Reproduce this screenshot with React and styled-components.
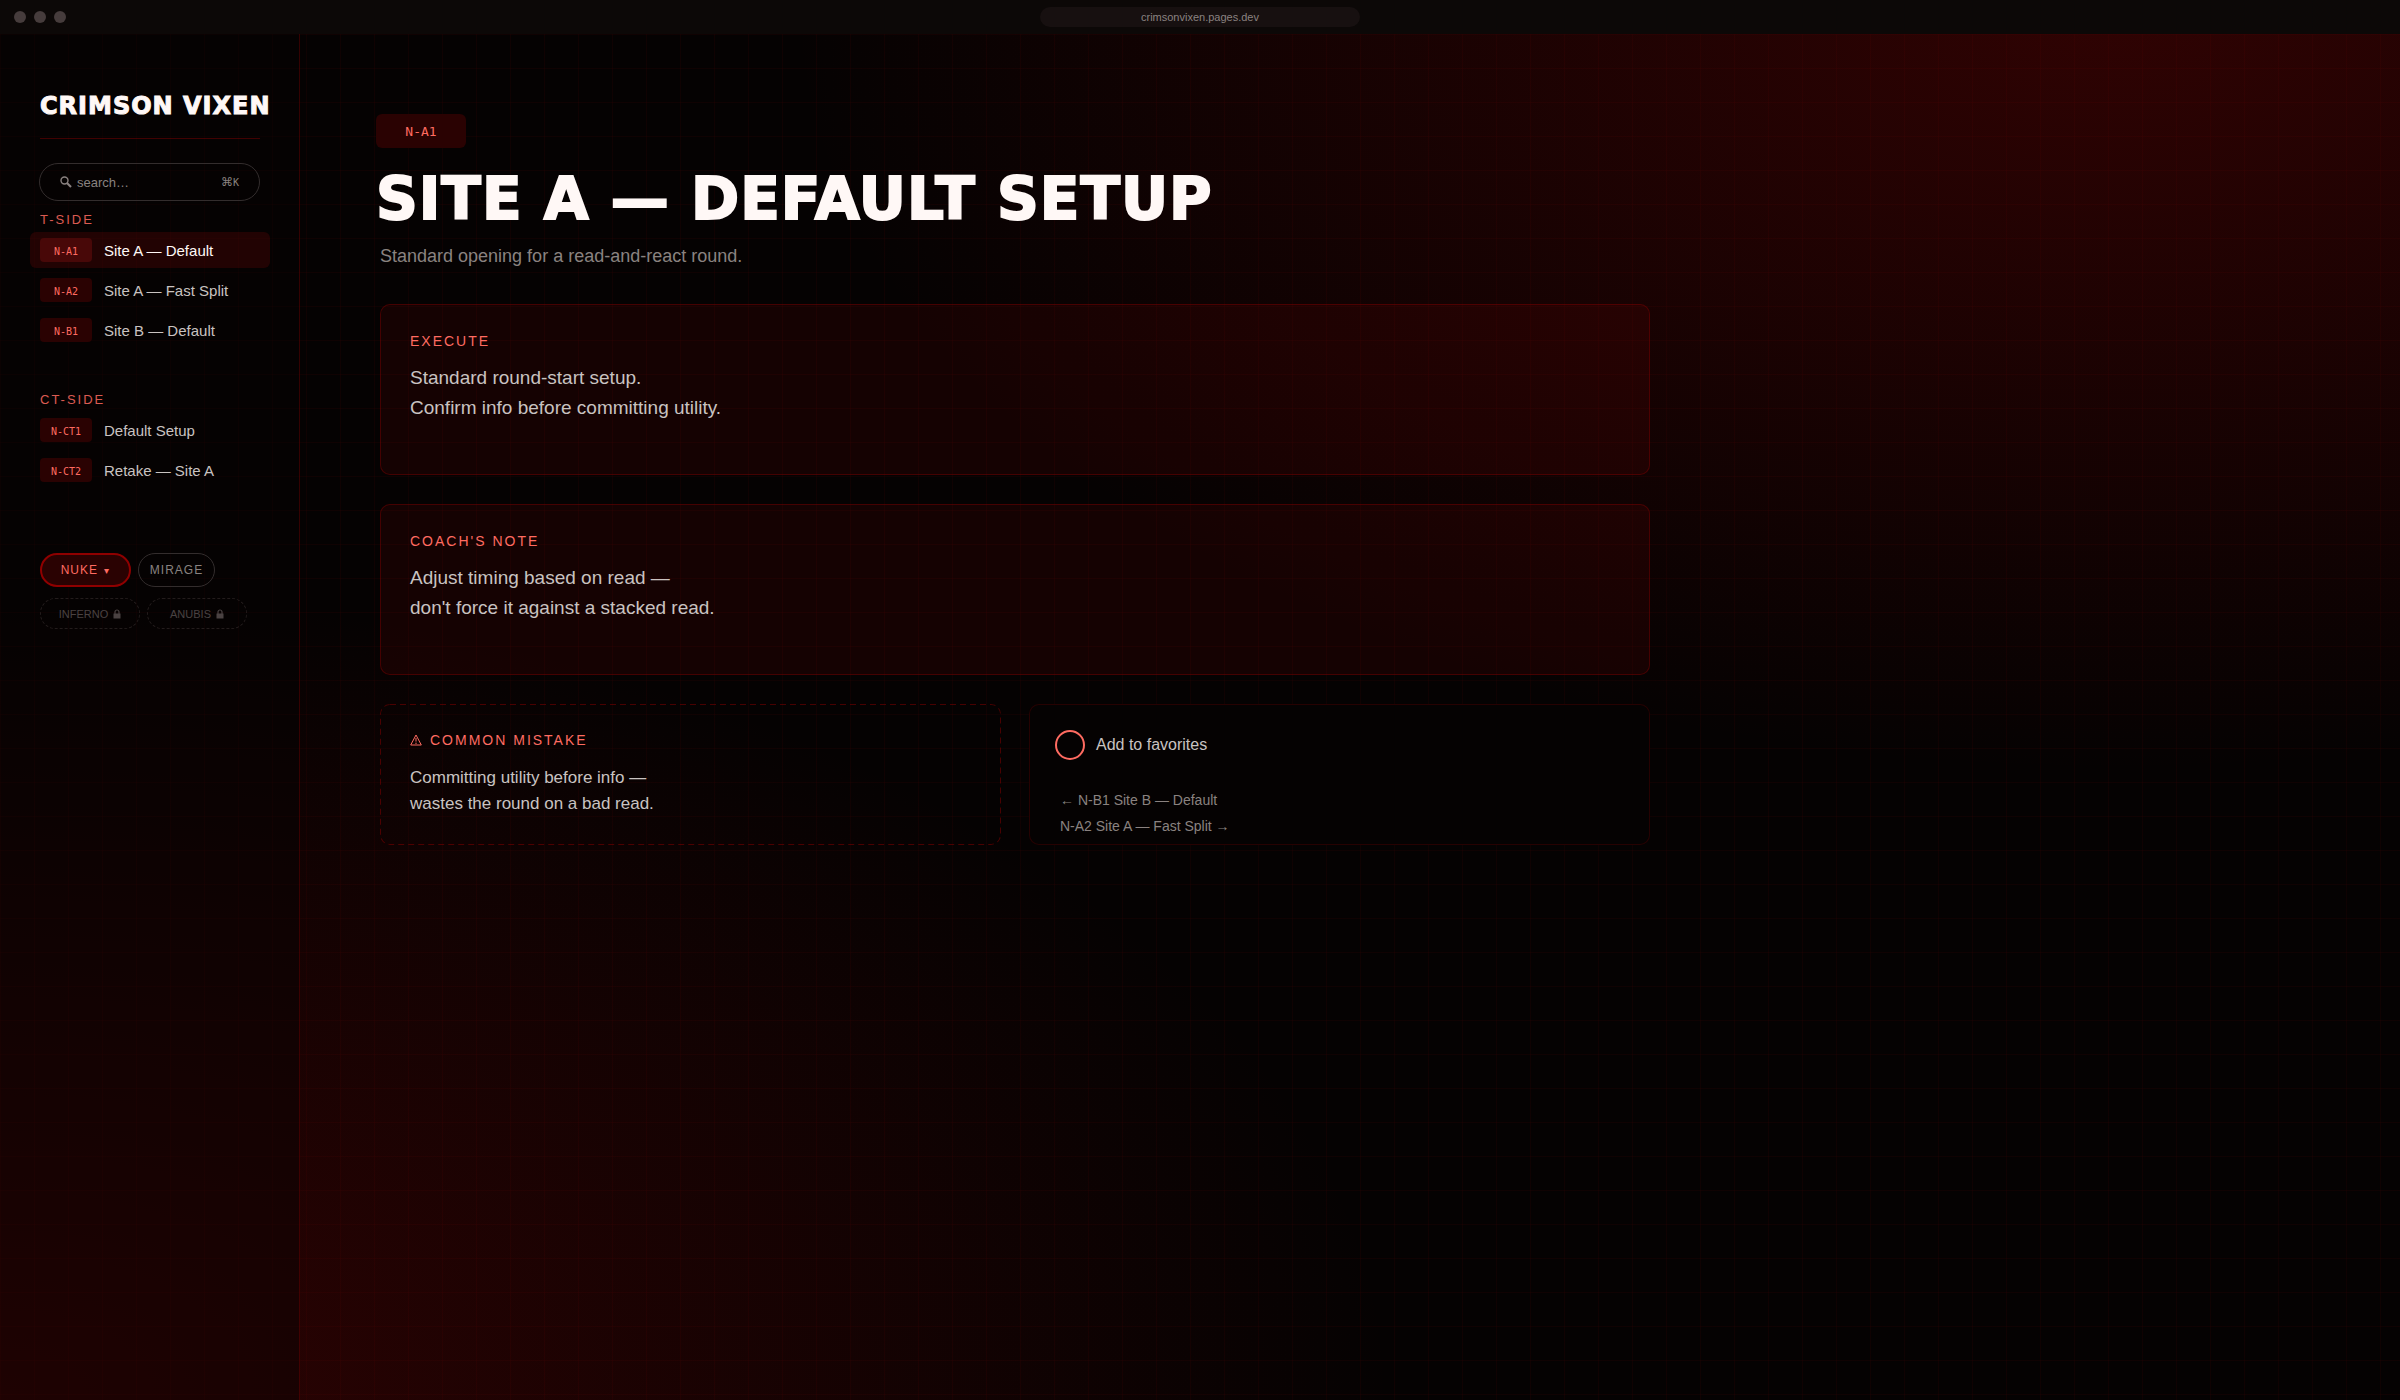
import React from 'react';
import styled, { createGlobalStyle } from 'styled-components';

const sans = '"Liberation Sans", Arial, sans-serif';
const mono = '"DejaVu Sans Mono", "Liberation Mono", monospace';
const display = '"Arial Black", "DejaVu Sans", sans-serif';
const coral = '#ff6b61';

const tSide = [
    { code: 'N-A1', name: 'Site A — Default', active: true },
    { code: 'N-A2', name: 'Site A — Fast Split' },
    { code: 'N-B1', name: 'Site B — Default' },
];

const ctSide = [
    { code: 'N-CT1', name: 'Default Setup' },
    { code: 'N-CT2', name: 'Retake — Site A' },
];

const Plays = ({ title, plays }) => (
    <Group aria-label={title}>
        <GroupTitle>{title}</GroupTitle>
        {plays.map((play) => (
            <Play href="#" key={play.code} $active={play.active}>
                <Code $active={play.active}>{play.code}</Code>
                {play.name}
            </Play>
        ))}
    </Group>
);

const LockIcon = () => (
    <svg width="8" height="10" viewBox="0 0 8 10" aria-hidden="true">
        <path d="M2 5V3a2 2 0 0 1 4 0v2" fill="none" stroke="currentColor" strokeWidth="1.2" />
        <rect x="0.5" y="4.5" width="7" height="5" fill="currentColor" />
    </svg>
);

export default function App()
{
    return (
        <Page>
            <GlobalStyle />
            <BrowserBar>
                <Dots><Dot /><Dot /><Dot /></Dots>
                <Address>crimsonvixen.pages.dev</Address>
            </BrowserBar>
            <Body>
                <Sidebar>
                    <Brand>CRIMSON VIXEN</Brand>
                    <Search>
                        <svg width="12" height="12" viewBox="0 0 12 12" aria-hidden="true">
                            <circle cx="4.5" cy="4.5" r="3.5" fill="none" stroke="currentColor" strokeWidth="1.4" />
                            <path d="M7 7l4 4" stroke="currentColor" strokeWidth="2.2" />
                        </svg>
                        <input type="text" placeholder="search…" aria-label="search" />
                        <kbd><span>⌘</span>K</kbd>
                    </Search>
                    <Plays title="T-SIDE" plays={tSide} />
                    <Plays title="CT-SIDE" plays={ctSide} />
                    <Maps>
                        <MapRow>
                            <MapButton $width="91px" $active>NUKE <small>▾</small></MapButton>
                            <MapButton $width="77px">MIRAGE</MapButton>
                        </MapRow>
                        <MapRow>
                            <LockedMap disabled>INFERNO <LockIcon /></LockedMap>
                            <LockedMap disabled>ANUBIS <LockIcon /></LockedMap>
                        </MapRow>
                    </Maps>
                </Sidebar>
                <Main>
                    <Badge>N-A1</Badge>
                    <Title>SITE A — DEFAULT SETUP</Title>
                    <Subtitle>Standard opening for a read-and-react round.</Subtitle>
                    <Cards>
                        <Card>
                            <CardTitle>EXECUTE</CardTitle>
                            <CardText>Standard round-start setup.<br />Confirm info before committing utility.</CardText>
                        </Card>
                        <Card>
                            <CardTitle>COACH'S NOTE</CardTitle>
                            <CardText>Adjust timing based on read —<br />don't force it against a stacked read.</CardText>
                        </Card>
                        <Pair>
                            <MistakeCard>
                                <DashedEdge aria-hidden="true">
                                    <rect width="100%" height="100%" rx="10" />
                                </DashedEdge>
                                <CardTitle>
                                    <svg width="12" height="12" viewBox="0 0 12 12" aria-hidden="true">
                                        <path d="M6 1L11.3 11H.7zM6 4v3.6M6 8.6v1.4" fill="none" stroke="currentColor" strokeWidth="1" />
                                    </svg>
                                    COMMON MISTAKE
                                </CardTitle>
                                <CardText $small>Committing utility before info —<br />wastes the round on a bad read.</CardText>
                            </MistakeCard>
                            <LinksCard>
                                <Favorite><input type="checkbox" />Add to favorites</Favorite>
                                <PlayLink href="#">← N-B1 Site B — Default</PlayLink>
                                <PlayLink href="#">N-A2 Site A — Fast Split →</PlayLink>
                            </LinksCard>
                        </Pair>
                    </Cards>
                </Main>
            </Body>
        </Page>
    );
}

const GlobalStyle = createGlobalStyle`
    * {
        box-sizing: border-box;
    }
    body {
        margin: 0;
        background: #050202;
    }
    button, input, kbd {
        font: inherit;
        color: inherit;
    }
`

const Page = styled.div`
    min-height: 100vh;
    display: flex;
    flex-direction: column;
    font-family: ${sans};
    color: #c9c3c1;
    background:
        linear-gradient(90deg, rgba(139, 0, 0, 0.08) 1px, transparent 1px) 0 0 / 34px 34px,
        linear-gradient(180deg, rgba(139, 0, 0, 0.08) 1px, transparent 1px) 0 0 / 34px 34px,
        radial-gradient(ellipse 55% 55% at 88% 0%, rgba(139, 4, 4, 0.32), rgba(139, 4, 4, 0)),
        radial-gradient(ellipse 58% 58% at 0% 100%, rgba(139, 4, 4, 0.31), rgba(139, 4, 4, 0)),
        #050202;
`

const BrowserBar = styled.header`
    height: 34px;
    display: grid;
    grid-template-columns: 1fr 320px 1fr;
    align-items: center;
    padding: 0 14px;
    background: #0c0807;
`

const Dots = styled.div`
    display: flex;
    gap: 8px;
`

const Dot = styled.span`
    width: 12px;
    height: 12px;
    border-radius: 50%;
    background: #463c3c;
`

const Address = styled.div`
    height: 20px;
    border-radius: 10px;
    background: #171010;
    color: #8a8280;
    font-size: 11px;
    line-height: 20px;
    text-align: center;
`

const Body = styled.div`
    flex: 1;
    display: flex;
`

const Sidebar = styled.aside`
    width: 300px;
    flex-shrink: 0;
    padding: 56px 29px 0 40px;
    border-right: 1px solid rgba(139, 0, 0, 0.35);
    background: rgba(5, 2, 2, 0.38);
`

const Brand = styled.div`
    height: 49px;
    margin-right: 10px;
    border-bottom: 1px solid rgba(139, 0, 0, 0.45);
    color: #fff8f6;
    font: 900 24px/32px ${display};
    letter-spacing: 1px;
    white-space: nowrap;
    -webkit-text-stroke: 1px #fff8f6;
`

const Search = styled.label`
    height: 38px;
    margin: 24px 10px 0 -1px;
    padding: 0 20px;
    display: flex;
    align-items: center;
    gap: 5px;
    border: 1px solid #332d2d;
    border-radius: 19px;
    color: #8a8280;
    font-size: 13px;

    input {
        flex: 1;
        min-width: 0;
        padding: 0;
        border: 0;
        background: none;
    }
    input::placeholder {
        color: inherit;
        opacity: 1;
    }
    kbd {
        font: 10px ${mono};
    }
    kbd span {
        font: 12px "DejaVu Sans", sans-serif;
    }
`

const Group = styled.nav`
    padding-top: 10px;
    margin-bottom: 33px;
`

const GroupTitle = styled.h2`
    margin: 0 0 3px;
    color: ${coral};
    opacity: 0.85;
    font-size: 13px;
    font-weight: 400;
    line-height: 18px;
    letter-spacing: 2px;
`

const Play = styled.a`
    height: 36px;
    margin: 0 0 4px -10px;
    padding-left: 10px;
    display: flex;
    align-items: center;
    gap: 12px;
    border-radius: 6px;
    background: ${(props) => props.$active ? 'rgba(139, 8, 8, 0.22)' : 'none'};
    color: ${(props) => props.$active ? '#fff8f6' : '#c9c3c1'};
    font-size: 15px;
    text-decoration: none;
`

const Code = styled.span`
    width: 52px;
    height: 24px;
    border-radius: 4px;
    background: ${(props) => props.$active ? '#480808' : '#2a0202'};
    color: ${coral};
    font: 10px/27px ${mono};
    text-align: center;
`

const Maps = styled.div`
    margin-top: 65px;
    display: grid;
    gap: 11px;
`

const MapRow = styled.div`
    display: flex;
    gap: 7px;
`

const MapButton = styled.button`
    width: ${(props) => props.$width};
    height: 34px;
    padding: 0;
    border: ${(props) => props.$active ? '2px solid #8f0000' : '1px solid #332d2d'};
    border-radius: 17px;
    background: ${(props) => props.$active ? '#2a0202' : 'none'};
    color: ${(props) => props.$active ? coral : '#8a8280'};
    font-size: 12px;
    letter-spacing: 1px;

    small {
        margin-left: 2px;
        font-size: 10px;
    }
`

const LockedMap = styled.button`
    width: 100px;
    height: 31px;
    padding: 0;
    display: flex;
    align-items: center;
    justify-content: center;
    gap: 5px;
    border: 1px dashed #231c1c;
    border-radius: 16px;
    background: none;
    color: #4a4242;
    font-size: 11px;
`

const Main = styled.main`
    flex: 1;
    padding: 80px 80px 40px;
`

const Badge = styled.div`
    width: 90px;
    height: 34px;
    margin-left: -4px;
    border-radius: 6px;
    background: #2a0202;
    color: ${coral};
    font: 13px/36px ${mono};
    text-align: center;
`

const Title = styled.h1`
    margin: 16px 0 0 -4px;
    color: #fff8f6;
    font: 900 58px/70px ${display};
    letter-spacing: 1px;
    white-space: nowrap;
    -webkit-text-stroke: 2px #fff8f6;
`

const Subtitle = styled.p`
    margin: 12px 0 0;
    color: #8a8280;
    font-size: 18px;
    line-height: 20px;
`

const Cards = styled.div`
    max-width: 1270px;
    margin-top: 38px;
    display: grid;
    gap: 29px;
`

const Card = styled.section`
    min-height: 171px;
    padding: 26px 29px;
    border: 1px solid rgba(139, 0, 0, 0.4);
    border-radius: 10px;
    background: rgba(139, 8, 8, 0.12);
`

const CardTitle = styled.h2`
    margin: 0;
    display: flex;
    align-items: center;
    gap: 8px;
    color: ${coral};
    font-size: 14px;
    font-weight: 400;
    line-height: 20px;
    letter-spacing: 2px;
`

const CardText = styled.p`
    margin: ${(props) => props.$small ? '15px' : '12px'} 0 0;
    font-size: ${(props) => props.$small ? '17px' : '19px'};
    line-height: ${(props) => props.$small ? '26px' : '30px'};
`

const Pair = styled.div`
    display: grid;
    grid-template-columns: 1fr 1fr;
    gap: 28px;
`

const MistakeCard = styled.section`
    position: relative;
    min-height: 141px;
    padding: 26px 30px;
`

const DashedEdge = styled.svg`
    position: absolute;
    inset: 0;
    width: 100%;
    height: 100%;
    border-radius: 10px;

    rect {
        fill: none;
        stroke: rgba(139, 0, 0, 0.5);
        stroke-width: 2;
        stroke-dasharray: 6 4;
    }
`

const LinksCard = styled.section`
    min-height: 141px;
    padding: 25px 25px 0;
    border: 1px solid rgba(139, 0, 0, 0.25);
    border-radius: 10px;
    background: #050202;
`

const Favorite = styled.label`
    height: 30px;
    margin-bottom: 27px;
    display: flex;
    align-items: center;
    gap: 11px;
    font-size: 16px;

    input {
        appearance: none;
        width: 30px;
        height: 30px;
        margin: 0;
        border: 2px solid ${coral};
        border-radius: 50%;
    }
`

const PlayLink = styled.a`
    display: block;
    margin-left: 5px;
    color: #8a8280;
    font-size: 14px;
    line-height: 26px;
    text-decoration: none;
`
